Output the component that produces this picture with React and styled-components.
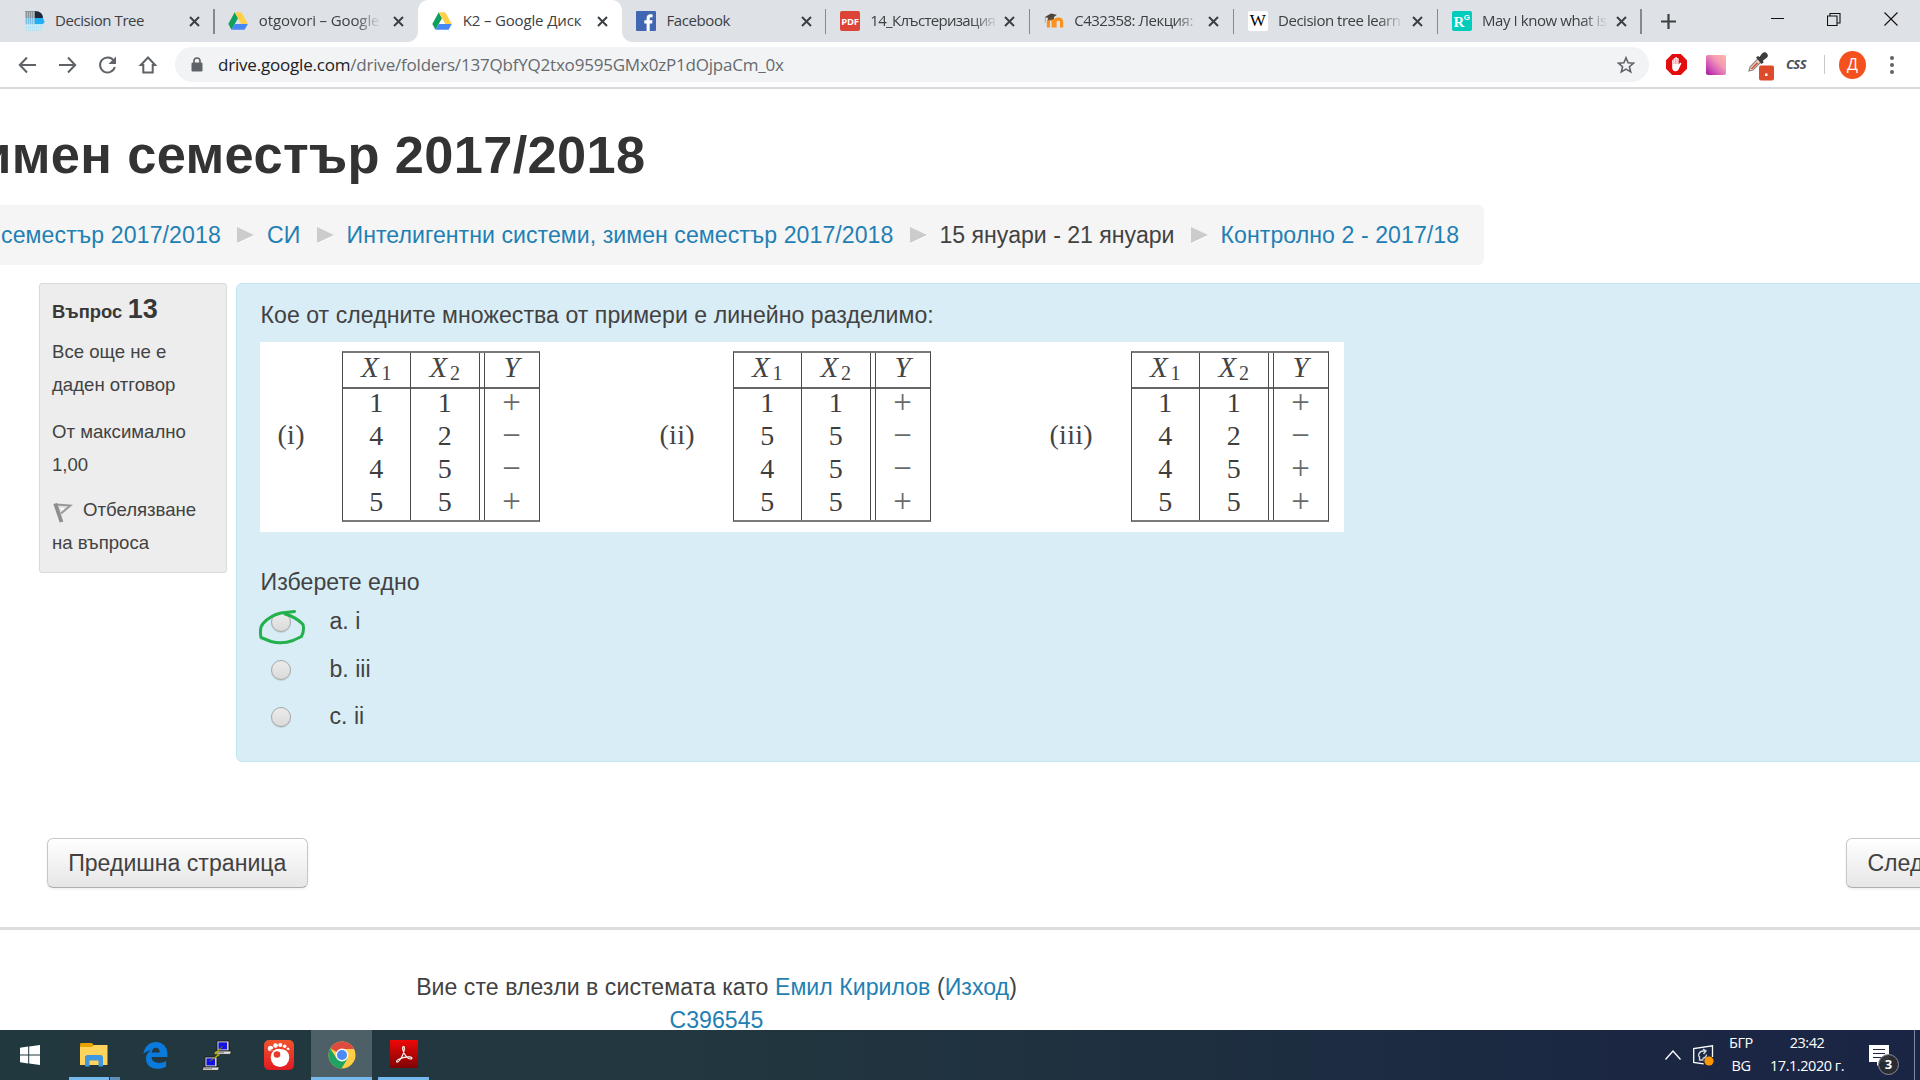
import React from "react";
import styled, { createGlobalStyle, css } from "styled-components";

const Global = createGlobalStyle`
  * { box-sizing: border-box; }
  html, body { margin: 0; padding: 0; background: #fff; }
  body { overflow: hidden; }
`;

const ui = `"Open Sans", "Noto Sans", sans-serif`;
const page = `"Liberation Sans", Arial, sans-serif`;

const Screen = styled.div`
  width: 1920px;
  height: 1080px;
  display: flex;
  flex-direction: column;
  overflow: hidden;
  background: #fff;
`;

/* ---------- browser chrome ---------- */

const TabStrip = styled.div`
  height: 42px;
  flex: none;
  display: flex;
  align-items: stretch;
  padding-left: 10.6px;
  background: #dee1e6;
`;

const Tab = styled.div`
  position: relative;
  width: 203.85px;
  flex: none;
  display: flex;
  align-items: center;
  padding-left: 14px;
  ${(p) =>
    p.$divider &&
    css`
      &::after {
        content: "";
        position: absolute;
        right: -0.5px;
        top: 9px;
        width: 1.5px;
        height: 25px;
        background: #85888d;
      }
    `}
  ${(p) =>
    p.$active &&
    css`
      background: #fff;
      border-radius: 10px 10px 0 0;
      &::before,
      &::after {
        content: "";
        position: absolute;
        bottom: 0;
        width: 10px;
        height: 10px;
      }
      &::before {
        left: -10px;
        background: radial-gradient(circle at 0 0, transparent 9.5px, #fff 10px);
      }
      &::after {
        right: -10px;
        background: radial-gradient(circle at 100% 0, transparent 9.5px, #fff 10px);
      }
    `}
`;

const TabTitle = styled.span`
  flex: none;
  width: 127px;
  margin-left: 10.4px;
  margin-right: 7px;
  padding-bottom: 2px;
  overflow: hidden;
  white-space: nowrap;
  font: 15px/24px ${ui};
  letter-spacing: ${(p) => p.$spacing}px;
  color: #3c4043;
  ${(p) =>
    p.$fade &&
    css`
      mask-image: linear-gradient(90deg, #000 ${p.$fade - 26}px, transparent ${p.$fade}px);
    `}
`;

const NewTab = styled.div`
  width: 54px;
  display: flex;
  align-items: center;
  justify-content: center;
`;

const WindowButtons = styled.div`
  margin-left: auto;
  display: flex;
  height: 38px;
`;

const WindowButton = styled.div`
  width: 57px;
  display: flex;
  align-items: center;
  justify-content: center;
`;

const Toolbar = styled.div`
  height: 47px;
  flex: none;
  display: flex;
  align-items: center;
  padding: 0 13px 0 17px;
  border-bottom: 2px solid #d9dae0;
  background: #fff;
`;

const NavButtons = styled.div`
  display: flex;
  gap: 20px;
  width: 158px;
`;

const AddressBar = styled.div`
  width: 1474px;
  height: 35px;
  display: flex;
  align-items: center;
  padding: 0 14px 0 16px;
  border-radius: 18px;
  background: #f1f3f4;
`;

const Url = styled.span`
  flex: 1;
  margin-left: 15px;
  font: 17px/26px ${ui};
  letter-spacing: -0.2px;
  color: #666a6e;
  white-space: nowrap;
`;

const Domain = styled.span`
  color: #202124;
`;

const Extensions = styled.div`
  display: flex;
  align-items: center;
  margin-left: 17px;
  flex: 1;
`;

const ExtIcon = styled.div`
  flex: none;
  display: flex;
  width: ${(p) => p.$w}px;
`;

const PinkSquare = styled.div`
  width: 20px;
  height: 20px;
  border-radius: 2px;
  background: linear-gradient(45deg, #a5179c 0%, #d860b8 35%, #f59cb4 65%, #fdb7a0 100%);
`;

const CssLabel = styled.span`
  width: 37.5px;
  font: italic bold 13px/20px ${ui};
  letter-spacing: -0.6px;
  color: #4a4d51;
  padding-bottom: 2px;
`;

const ToolbarDivider = styled.div`
  width: 1px;
  height: 19px;
  background: #c6c9cd;
  margin-right: 14.5px;
`;

const Avatar = styled.div`
  width: 27px;
  height: 28px;
  border-radius: 50%;
  background: #f4511e;
  color: #fff;
  font: 16px/27px ${ui};
  text-align: center;
  margin-right: 24px;
`;

const Dots = styled.div`
  display: flex;
  flex-direction: column;
  gap: 3px;
`;

const Dot = styled.i`
  width: 4px;
  height: 4px;
  border-radius: 50%;
  background: #5f6368;
`;

/* ---------- quiz page ---------- */

const Content = styled.main`
  flex: 1;
  min-height: 0;
  overflow: hidden;
  font: 23.1px/30px ${page};
  color: #424242;
`;

const TitleRow = styled.header`
  width: 645.5px;
  height: 116px;
  display: flex;
  justify-content: flex-end;
  padding-top: 40px;
`;

const Title = styled.h1`
  margin: 0;
  flex: none;
  font-size: 52.4px;
  line-height: 52px;
  letter-spacing: 0.35px;
  color: #333;
  white-space: nowrap;
`;

const Breadcrumb = styled.nav`
  width: 1484px;
  height: 60px;
  display: flex;
  align-items: center;
  padding-left: 1px;
  border-radius: 0 6px 6px 0;
  background: #f5f5f5;
  white-space: nowrap;
`;

const Crumb = styled.span`
  flex: none;
  width: ${(p) => p.$w}px;
  letter-spacing: ${(p) => p.$spacing || 0}px;
  color: ${(p) => (p.$plain ? "#424242" : "#1f80b4")};
`;

const Arrow = styled.i`
  flex: none;
  margin: 0 13px 0 16px;
  border-left: 17px solid #ccc;
  border-top: 8px solid transparent;
  border-bottom: 8px solid transparent;
  filter: drop-shadow(0 1px 0 #fff);
`;

const QuestionRow = styled.section`
  display: flex;
  align-items: flex-start;
  gap: 9px;
  margin-top: 18px;
  padding-left: 39px;
`;

const InfoBox = styled.aside`
  width: 188px;
  height: 290px;
  flex: none;
  padding: 9px 12px 0;
  border: 1.5px solid #dadada;
  border-radius: 3px;
  background: #ededed;
  font-size: 18.6px;
  line-height: 33.1px;
  white-space: nowrap;
`;

const QuestionNo = styled.h3`
  height: 33px;
  margin: 0 0 9px;
  display: flex;
  align-items: baseline;
  gap: 5.5px;
  font-size: 18.4px;
  line-height: 33px;
  color: #383838;
`;

const Number = styled.span`
  font-size: 27px;
`;

const InfoText = styled.p`
  margin: 0 0 ${(p) => p.$gap || 0}px;
`;

const Flag = styled.svg`
  width: 20px;
  height: 21px;
  margin: 0 10px -7px 1px;
`;

const QuestionBox = styled.article`
  flex: none;
  width: 1720px;
  height: 479px;
  padding: 16px 22.5px 0;
  border: 1.5px solid #bfe8f2;
  border-radius: 6px;
  background: #d9edf6;
`;

const Prompt = styled.p`
  margin: 0;
  padding-left: 1px;
  letter-spacing: 0.04px;
`;

const Figure = styled.div`
  display: grid;
  grid-template-columns: 64px 198px 120px 73px 198px 119px 81px 198px;
  width: 1084px;
  height: 190px;
  margin: 11.5px 0 35px;
  padding: 9px 0 0 18px;
  background: #fff;
  font-family: "Liberation Serif", "Times New Roman", serif;
`;

const SetLabel = styled.span`
  grid-column: ${(p) => p.$col};
  font-size: 28px;
  line-height: 167px;
  letter-spacing: 0.3px;
  color: #444;
`;

const DataTable = styled.div`
  grid-column: ${(p) => p.$col};
  height: 171px;
  display: grid;
  grid-template-columns: 67.5px 68.5px 5px 1fr;
  border: 1.5px solid #4a4a4a;
  border-top: 2px solid #7a7a7a;
  border-bottom: 2px solid #7a7a7a;
`;

const Column = styled.div`
  display: flex;
  flex-direction: column;
  border-left: ${(p) => (p.$line ? "1.5px solid #4a4a4a" : "none")};
`;

const HeadCell = styled.div`
  height: 36px;
  flex: none;
  display: flex;
  justify-content: center;
  align-items: baseline;
  border-bottom: 2px solid #666;
  font-size: 29px;
  font-style: italic;
  line-height: 28px;
  margin-bottom: -3px;
  color: #444;
`;

const Sub = styled.span`
  margin: 0 0 0 3px;
  font-size: 20px;
  font-style: normal;
  line-height: 1;
  position: relative;
  top: 3px;
`;

const Cell = styled.div`
  height: 33.3px;
  flex: none;
  text-align: center;
  font-size: ${(p) => (p.$sign ? 33 : 28)}px;
  line-height: 33.3px;
  color: ${(p) => (p.$sign ? "#6a6a6a" : "#3e3e3e")};
`;

const Option = styled.div`
  height: ${(p) => p.$h}px;
  display: flex;
  align-items: center;
  gap: 38.5px;
  padding-left: 11.5px;
`;

const RadioWrap = styled.span`
  position: relative;
  display: block;
  width: 20px;
  height: 20px;
  margin-top: 3px;
`;

const Radio = styled.i`
  display: block;
  width: 20px;
  height: 20px;
  border: 1.5px solid #a6a6a6;
  border-radius: 50%;
  background: linear-gradient(#ececec, #dadada);
  box-shadow: 0 1px 1px rgba(0, 0, 0, 0.12);
`;

const Scribble = styled.svg`
  position: absolute;
  left: -13.5px;
  top: -3.5px;
  width: 48px;
  height: 36px;
`;

const ScribbleMask = styled.i`
  position: absolute;
  left: 0;
  top: -1px;
  width: 20px;
  height: 3px;
  background: #d9edf6;
`;

const PagerRow = styled.div`
  display: flex;
  margin-top: 76px;
  padding-left: 46.5px;
  gap: 1538px;
`;

const PagerButton = styled.button`
  flex: none;
  width: 261.5px;
  height: 50px;
  padding: 0 0 1px;
  border: 1.5px solid #c8c8c8;
  border-bottom-color: #aeaeae;
  border-radius: 6px;
  background: linear-gradient(#fff, #e6e6e6);
  box-shadow: 0 1px 3px rgba(0, 0, 0, 0.08);
  color: #424242;
  font: 23.1px/30px ${page};
  white-space: nowrap;
`;

const Rule = styled.hr`
  height: 3px;
  margin: 39px 0 41px;
  border: 0;
  background: #ddd;
`;

const Footer = styled.footer`
  width: 1433px;
  text-align: center;
  line-height: 33px;
  letter-spacing: 0.04px;
`;

const FootLink = styled.span`
  color: #1f80b4;
`;

/* ---------- taskbar ---------- */

const Taskbar = styled.div`
  height: 50px;
  flex: none;
  display: flex;
  align-items: stretch;
  background: linear-gradient(90deg, #22383f 0%, #22373f 35%, #1e2f40 62%, #1b2742 85%, #1a2545 100%);
`;

const TaskItem = styled.div`
  width: ${(p) => p.$w}px;
  flex: none;
  display: flex;
  align-items: center;
  justify-content: center;
  padding-bottom: ${(p) => p.$lift || 0}px;
  background: ${(p) => (p.$active ? "#4d5f67" : "transparent")};
  box-shadow: ${(p) => (p.$running ? "inset 0 -3px 0 #76b9ed" : "none")};
`;

const Stack = styled.div`
  width: 11px;
  margin-right: 10px;
  box-shadow: inset 1px 0 0 #22383f, inset 0 -3px 0 #5d8fb8;
  align-self: flex-end;
  height: 3px;
`;

const Spacer = styled.div`
  width: ${(p) => p.$w}px;
  flex: ${(p) => (p.$w ? "none" : 1)};
`;

const TrayIcon = styled.div`
  display: flex;
  align-items: center;
  width: ${(p) => p.$w}px;
`;

const TrayText = styled.div`
  width: ${(p) => p.$w}px;
  padding-top: 2px;
  text-align: center;
  font: 14.5px/22.5px ${ui};
  letter-spacing: -0.45px;
  color: #fff;
  white-space: nowrap;
`;

const ActionCenter = styled.div`
  position: relative;
  width: 57px;
  margin-left: 1px;
  padding: 15px 0 0 11px;
  border-right: 1px solid #8089a0;
`;

const Badge = styled.span`
  position: absolute;
  left: 20px;
  top: 24px;
  width: 21px;
  height: 21px;
  border: 1.5px solid #8a8d92;
  border-radius: 50%;
  background: rgba(43, 45, 50, 0.94);
  color: #fff;
  font: bold 13px/18px ${ui};
  text-align: center;
`;

/* ---------- drawings ---------- */

const CloseIcon = () => (
  <svg width="11" height="11" viewBox="0 0 11 11" stroke="#3c4043" strokeWidth="2">
    <path d="M1 1l9 9M10 1l-9 9" />
  </svg>
);

const DriveIcon = () => (
  <svg width="20" height="20" viewBox="0 0 20 20">
    <path d="M6.7 1.2L0.3 13l3.2 5.8L10 7.2z" fill="#11a05c" />
    <path d="M6.7 1.2h6.6L19.8 13h-6.6z" fill="#ffcf48" />
    <path d="M6.9 13h12.9l-3.2 5.8H3.5z" fill="#4787f3" />
  </svg>
);

const HeadIcon = () => (
  <svg width="20" height="20" viewBox="0 0 20 20">
    <path d="M0 0h10v7H0z" fill="#8b949b" />
    <path d="M10 0c5 0 8 3 8 7h-8z" fill="#1f2a3a" />
    <path d="M0 7h10v6H0z" fill="#7cc0e6" />
    <path d="M10 7h8l1.6 4-1.6 2h-8z" fill="#22b0f5" />
    <path d="M0 13h18l-.6 4-2 1.6V20H0z" fill="#b7e3f3" />
    <path d="M0 2h10M0 4h10M0 6h10M0 8h10M0 10h10M0 12h10M0 15h17M0 18h15" stroke="#fff" strokeWidth=".7" strokeDasharray="1 1" />
  </svg>
);

const FacebookIcon = () => (
  <svg width="20" height="20" viewBox="0 0 20 20">
    <rect width="20" height="20" rx="1" fill="#4267b2" />
    <path d="M10.6 20v-7.6H8.3V9.3h2.3V7.2c0-2.5 1.5-3.9 3.8-3.9.9 0 1.8.1 2.2.2v2.7h-1.5c-1.2 0-1.4.6-1.4 1.5v1.6h2.8l-.4 3.1h-2.4V20z" fill="#fff" />
  </svg>
);

const IconTile = styled.span`
  width: 20px;
  height: 20px;
  flex: none;
  border-radius: 2px;
  background: ${(p) => p.$bg};
  color: ${(p) => p.$fg};
  font: ${(p) => p.$font};
  letter-spacing: ${(p) => p.$spacing || 0}px;
  text-align: center;
  white-space: nowrap;
`;

const SmallG = styled.sup`
  font: bold 8px/8px "Liberation Sans", sans-serif;
  vertical-align: 7px;
`;

const MoodleIcon = () => (
  <svg width="20" height="20" viewBox="0 0 20 20" fill="none">
    <path d="M4.4 16.5v-5.6c0-3.6 4.8-3.6 4.8 0v5.6M11 16.5v-5.6c0-3.6 6.6-3.6 6.6 0v5.6" stroke="#f7931e" strokeWidth="3.2" />
    <path d="M0.5 6.2L7 2.5l5.8 1.3L8.2 7.4z" fill="#4b4238" />
    <path d="M4 6.5v3c2-.8 4-.8 6-1.500V5z" fill="#5a4a3c" />
    <path d="M1.300 6.500v5" stroke="#a89a88" strokeWidth=".8" />
  </svg>
);

const NavIcon = ({ children }) => (
  <svg width="20" height="20" viewBox="0 0 20 20" fill="none" stroke="#5f6368" strokeWidth="2">
    {children}
  </svg>
);

const EdgeIcon = () => (
  <svg width="25" height="27" viewBox="0 0 25 27">
    <path
      d="M0.400 12.100C1.200 5.300 6 0 12.800 0 20 0 24.400 5 24.400 12v3H8.500c.2 4.200 3.600 5.900 7.600 5.900 2.600 0 4.900-.7 7-2v5.600c-2.300 1.500-5.400 2.300-8.900 2.300C7.300 26.800 3 22.700 3 16.600c0-3.400 1.700-6.500 4.700-8.400C4.600 8.800 1.900 10.300.4 12.100zM8.700 10.500h8.100c0-3.200-1.500-4.800-3.900-4.800-2.300 0-3.700 1.800-4.200 4.800z"
      fill="#0a7bdc"
    />
  </svg>
);

const PuttyIcon = () => (
  <svg width="30" height="31" viewBox="0 0 30 31">
    {[[12, 0], [0, 16]].map(([x, y]) => (
      <g key={x} transform={`translate(${x} ${y})`}>
        <path d="M3 1h12v10H3z" fill="#d0d0d0" stroke="#111" strokeWidth=".8" />
        <path d="M4.500 2.400h8.500v7H4.500z" fill="#1212e6" />
        <path d="M1 11h16.500l-1.200 3.400H.6z" fill="#e0e0e0" stroke="#111" strokeWidth=".8" />
        <path d="M2 12.700h8" stroke="#888" />
      </g>
    ))}
    <path d="M21 6l-9 7.500 4 1L7.500 21.500 18 14.800l-4-1.200z" fill="#f5f000" stroke="#6d6d00" strokeWidth=".5" />
  </svg>
);

const GomIcon = () => (
  <svg width="30" height="30" viewBox="0 0 30 30">
    <defs>
      <linearGradient id="gom" x1="0" y1="0" x2="0" y2="1">
        <stop offset="0" stopColor="#f0532b" />
        <stop offset="1" stopColor="#e31a24" />
      </linearGradient>
    </defs>
    <rect width="30" height="30" rx="5" fill="url(#gom)" />
    <ellipse cx="16" cy="17.500" rx="9.300" ry="9.500" fill="#fff" />
    <circle cx="6.500" cy="8.500" r="2.700" fill="#fff" />
    <circle cx="11.500" cy="5.600" r="2.300" fill="#fff" />
    <circle cx="16.300" cy="5" r="2.100" fill="#fff" />
    <circle cx="20.700" cy="6.200" r="1.800" fill="#fff" />
    <circle cx="24" cy="9" r="1.500" fill="#fff" />
    <circle cx="13" cy="14.500" r="3.300" fill="#e8392a" />
    <path d="M6.500 10.500Q15 5.500 25 11" stroke="#ec4027" strokeWidth="1.200" fill="none" />
  </svg>
);

const ChromeIcon = () => (
  <svg width="28" height="28" viewBox="0 0 28 28">
    <circle cx="14" cy="14" r="13.500" fill="#ffcd46" />
    <path d="M14 14L2.300 7.250A13.500 13.500 0 0 1 25.700 7.250L25.700 8H14z" fill="#dd4b3e" />
    <path d="M2.300 7.250A13.500 13.500 0 0 0 13.500 27.500L19.600 17.500 14 20 8.400 17.250z" fill="#1ea362" />
    <circle cx="14" cy="14" r="6.400" fill="#f5f5f5" />
    <circle cx="14" cy="14" r="5" fill="#4c8bf5" />
  </svg>
);

const AcrobatIcon = () => (
  <svg width="28" height="28" viewBox="0 0 28 28">
    <defs>
      <linearGradient id="acro" x1="0" y1="0" x2="0" y2="1">
        <stop offset="0" stopColor="#f00808" />
        <stop offset="1" stopColor="#7d0303" />
      </linearGradient>
    </defs>
    <rect width="28" height="28" rx="1" fill="url(#acro)" />
    <path
      d="M13.600 6.500c-1.800.2-.8 4 .6 6.800 1.400 2.900 4 5.400 6.300 5.700 2.100.2 2-1.900-.6-2.100-3.300-.3-7.500.7-10.600 2.100-2.500 1.200-3.300 2.500-2.500 3 1.500.8 4.200-3.200 5.900-7 1.500-3.500 2.500-8.400.9-8.500z"
      fill="none"
      stroke="#fff"
      strokeWidth="1.100"
    />
  </svg>
);

const ExplorerIcon = () => (
  <svg width="28" height="26" viewBox="0 0 28 26">
    <path d="M0 2.500Q0 1 1 1h11l2 2.500v2H0z" fill="#e8a200" />
    <path d="M0 5h12l2-2h13.500v20H0z" fill="#ffd35c" />
    <path d="M5 24.500V15.500q0-2.500 2.500-2.500h13q2.500 0 2.500 2.500v9h-4.500v-6h-9v6z" fill="#3f97dd" />
  </svg>
);

const tabs = [
  { title: "Decision Tree", icon: <HeadIcon />, spacing: -0.42, divider: true },
  { title: "otgovori – Google", icon: <DriveIcon />, spacing: -0.12, fade: 122 },
  { title: "K2 – Google Диск", icon: <DriveIcon />, spacing: -0.15, active: true },
  { title: "Facebook", icon: <FacebookIcon />, spacing: -0.42, divider: true },
  {
    title: "14_Клъстеризация",
    icon: <IconTile $bg="#db4437" $fg="#fff" $font={`bold 9.5px/21px ${ui}`} $spacing={-0.3}>PDF</IconTile>,
    spacing: -0.7,
    fade: 128,
    divider: true,
  },
  { title: "C432358: Лекция:", icon: <MoodleIcon />, spacing: -0.5, fade: 126, divider: true },
  {
    title: "Decision tree learn",
    icon: <IconTile $bg="#fff" $fg="#000" $font={`17px/20px "Liberation Serif", serif`}>W</IconTile>,
    spacing: -0.48,
    fade: 126,
    divider: true,
  },
  {
    title: "May I know what is",
    icon: (
      <IconTile $bg="#00ccbb" $fg="#fff" $font={`bold 15px/22px "Liberation Serif", serif`} $spacing={-0.5}>
        R<SmallG>G</SmallG>
      </IconTile>
    ),
    spacing: -0.42,
    fade: 126,
    divider: true,
  },
];

const sets = [
  { label: "(i)", col: 1, x1: [1, 4, 4, 5], x2: [1, 2, 5, 5], y: ["+", "−", "−", "+"] },
  { label: "(ii)", col: 4, x1: [1, 5, 4, 5], x2: [1, 5, 5, 5], y: ["+", "−", "−", "+"] },
  { label: "(iii)", col: 7, x1: [1, 4, 4, 5], x2: [1, 2, 5, 5], y: ["+", "−", "+", "+"] },
];

const SetTable = ({ set }) => (
  <>
    <SetLabel $col={set.col}>{set.label}</SetLabel>
    <DataTable $col={set.col + 1}>
      <Column>
        <HeadCell>X<Sub>1</Sub></HeadCell>
        {set.x1.map((v, i) => <Cell key={i}>{v}</Cell>)}
      </Column>
      <Column $line>
        <HeadCell>X<Sub>2</Sub></HeadCell>
        {set.x2.map((v, i) => <Cell key={i}>{v}</Cell>)}
      </Column>
      <Column $line><HeadCell /></Column>
      <Column $line>
        <HeadCell>Y</HeadCell>
        {set.y.map((v, i) => <Cell key={i} $sign>{v}</Cell>)}
      </Column>
    </DataTable>
  </>
);

const options = [
  { text: "a. i", h: 48, marked: true },
  { text: "b. iii", h: 48 },
  { text: "c. ii", h: 46 },
];

export default function App() {
  return (
    <Screen>
      <Global />
      <TabStrip>
        {tabs.map((t) => (
          <Tab key={t.title} $active={t.active} $divider={t.divider}>
            {t.icon}
            <TabTitle $spacing={t.spacing} $fade={t.fade}>{t.title}</TabTitle>
            <CloseIcon />
          </Tab>
        ))}
        <NewTab>
          <svg width="15" height="15" viewBox="0 0 15 15" stroke="#3c4043" strokeWidth="2.200">
            <path d="M7.500 0v15M0 7.500h15" />
          </svg>
        </NewTab>
        <WindowButtons>
          <WindowButton>
            <svg width="13" height="13"><path d="M0 5h13v1H0z" fill="#111" /></svg>
          </WindowButton>
          <WindowButton>
            <svg width="16" height="13" viewBox="0 0 16 13" fill="none" stroke="#111" strokeWidth="1.100">
              <path d="M.5 3h9.500v9.500H.5zM3 3V.5h10V10h-3" />
            </svg>
          </WindowButton>
          <WindowButton>
            <svg width="15" height="14" viewBox="0 0 15 14" stroke="#111" strokeWidth="1.100">
              <path d="M.5.5l13 13M13.500.5l-13 13" />
            </svg>
          </WindowButton>
        </WindowButtons>
      </TabStrip>
      <Toolbar>
        <NavButtons>
          <NavIcon><path d="M19 10H3M10 2.500L2.800 10l7.200 7.500" /></NavIcon>
          <NavIcon><path d="M2 10h16M11 2.500l7.200 7.500-7.200 7.500" /></NavIcon>
          <NavIcon>
            <path d="M16.800 5.800A7.500 7.500 0 1 0 17.800 12" />
            <path d="M19 1.500v7.500h-7.500z" fill="#5f6368" stroke="none" />
          </NavIcon>
          <NavIcon><path d="M11 2.500L3.800 10h2.500v7.500h9.400V10h2.500z" /></NavIcon>
        </NavButtons>
        <AddressBar>
          <svg width="12" height="15" viewBox="0 0 12 15">
            <path d="M3 6V4a3 3 0 0 1 6 0v2" fill="none" stroke="#5f6368" strokeWidth="1.600" />
            <rect x=".5" y="5.500" width="11" height="9" rx="1.200" fill="#5f6368" />
          </svg>
          <Url><Domain>drive.google.com</Domain>/drive/folders/137QbfYQ2txo9595GMx0zP1dOjpaCm_0x</Url>
          <svg width="18" height="18" viewBox="0 0 18 18" fill="none" stroke="#5f6368" strokeWidth="1.600">
            <path d="M9 1.800l2.100 5 5.400.4-4.100 3.500 1.300 5.200L9 13.100l-4.700 2.800 1.300-5.200L1.500 7.200l5.400-.4z" />
          </svg>
        </AddressBar>
        <Extensions>
          <ExtIcon $w={40}>
            <svg width="21" height="21" viewBox="0 0 21 21">
              <path d="M6.200 0h8.600L21 6.200v8.600L14.800 21H6.200L0 14.800V6.200z" fill="#e40d0d" />
              <path d="M6.200 10V6.200q.9-1.200 1.500 0V4.500q.9-1.200 1.600 0V3.600q.9-1.200 1.700 0v.9q.9-1.200 1.600 0v6l1.500-1.700q1.300-.5 1.200.6l-2.500 5.600q-.8 2.200-3.200 2.200-3.400 0-3.400-3.600z" fill="#fff" />
              <path d="M7.800 6v4M9.400 5v5M11 5v5" stroke="#e40d0d" strokeWidth=".4" />
            </svg>
          </ExtIcon>
          <ExtIcon $w={41}><PinkSquare /></ExtIcon>
          <ExtIcon $w={39}>
            <svg width="28" height="32" viewBox="0 0 28 32">
              <path d="M2 22l1-4 8-8.500 3.500 3-8.500 8.500z" fill="#f2d5cc" stroke="#8b8b8b" strokeWidth="1.200" />
              <path d="M3.500 20l6-6.500 2 .5-6 6z" fill="#dd5533" />
              <path d="M9 8.500l2-1.500 1.500 1L15 4.500q3-2.500 5 0t-.5 4.500L16 11.500l.5 2-2 1.500z" fill="#3c3c3c" />
              <rect x="12" y="16.500" width="15" height="15" rx="2" fill="#dd4b2a" />
              <rect x="18" y="24.500" width="2.500" height="2.500" fill="#fff" />
            </svg>
          </ExtIcon>
          <CssLabel>CSS</CssLabel>
          <ToolbarDivider />
          <Avatar>Д</Avatar>
          <Dots><Dot /><Dot /><Dot /></Dots>
        </Extensions>
      </Toolbar>

      <Content>
        <TitleRow><Title>имен семестър 2017/2018</Title></TitleRow>
        <Breadcrumb>
          <Crumb $w={220} $spacing={0.1}>семестър 2017/2018</Crumb>
          <Arrow />
          <Crumb $w={33.5}>СИ</Crumb>
          <Arrow />
          <Crumb $w={547} $spacing={0.05}>Интелигентни системи, зимен семестър 2017/2018</Crumb>
          <Arrow />
          <Crumb $w={235} $plain>15 януари - 21 януари</Crumb>
          <Arrow />
          <Crumb $w={240} $spacing={0.07}>Контролно 2 - 2017/18</Crumb>
        </Breadcrumb>

        <QuestionRow>
          <InfoBox>
            <QuestionNo>Въпрос <Number>13</Number></QuestionNo>
            <InfoText $gap={14}>Все още не е<br />даден отговор</InfoText>
            <InfoText $gap={11.5}>От максимално<br />1,00</InfoText>
            <InfoText>
              <Flag viewBox="0 0 20 21">
                <path d="M3 2.500L17.500 3.500 8 11.500" fill="#e0e0e0" stroke="#999" strokeWidth="2" />
                <path d="M2.200 1.500L8.500 20" stroke="#8e8e8e" strokeWidth="3.800" />
                <path d="M7 5.500l5 .4L8.500 9z" fill="#fff" />
              </Flag>
              Отбелязване<br />на въпроса
            </InfoText>
          </InfoBox>
          <QuestionBox>
            <Prompt>Кое от следните множества от примери е линейно разделимо:</Prompt>
            <Figure>
              {sets.map((s) => <SetTable key={s.label} set={s} />)}
            </Figure>
            <Prompt>Изберете едно</Prompt>
            {options.map((o) => (
              <Option key={o.text} $h={o.h}>
                <RadioWrap>
                  <Radio />
                  {o.marked && (
                    <>
                      <ScribbleMask />
                      <Scribble viewBox="0 0 48 36">
                        <path
                          d="M36.500 2.500L23 4C16 5.500 11 8 5 14.500 2 18 2 23 3 28.500L13 32.500Q24 35.500 35 31.500L43.500 27.500Q46.500 22 45 15.500 38 8 27 5"
                          fill="none"
                          stroke="#22b14c"
                          strokeWidth="3"
                          strokeLinecap="round"
                          strokeLinejoin="round"
                        />
                      </Scribble>
                    </>
                  )}
                </RadioWrap>
                {o.text}
              </Option>
            ))}
          </QuestionBox>
        </QuestionRow>

        <PagerRow>
          <PagerButton>Предишна страница</PagerButton>
          <PagerButton>Следваща страница</PagerButton>
        </PagerRow>
        <Rule />
        <Footer>
          Вие сте влезли в системата като <FootLink>Емил Кирилов</FootLink> (<FootLink>Изход</FootLink>)
          <br />
          <FootLink>C396545</FootLink>
        </Footer>
      </Content>

      <Taskbar>
        <TaskItem $w={60}>
          <svg width="20" height="20" viewBox="0 0 20 20" fill="#fff">
            <path d="M0 2.800l8.200-1.200v7.900H0zM9.200 1.500L20 0v9.500H9.200zM0 10.500h8.200v7.900L0 17.200zM9.200 10.500H20V20L9.200 18.500z" />
          </svg>
        </TaskItem>
        <Spacer $w={9} />
        <TaskItem $w={40} $running><Spacer $w={9} /><ExplorerIcon /></TaskItem>
        <Stack />
        <TaskItem $w={51}><EdgeIcon /></TaskItem>
        <Spacer $w={10} />
        <TaskItem $w={52}><PuttyIcon /></TaskItem>
        <Spacer $w={10} />
        <TaskItem $w={52}><GomIcon /></TaskItem>
        <Spacer $w={6} />
        <TaskItem $w={61} $active $running><ChromeIcon /></TaskItem>
        <Spacer $w={6} />
        <TaskItem $w={51} $running $lift={2}><AcrobatIcon /></TaskItem>
        <Spacer />
        <TrayIcon $w={28}>
          <svg width="16" height="10" viewBox="0 0 16 10" fill="none" stroke="#fff" strokeWidth="1.300">
            <path d="M.5 9.500L8 1l7.500 8.500" />
          </svg>
        </TrayIcon>
        <TrayIcon $w={32}>
          <svg width="21" height="21" viewBox="0 0 21 21" fill="none" stroke="#fff" strokeWidth="1.300">
            <path d="M19.500 12V.8L.7 3.500v14l10 1.300" />
            <path d="M5.500 11.500q0-5 4.500-5.500h3M10 4l3 2-2.500 3M13.500 9.500q0 3-4 4M6.500 11v4h4" strokeWidth="1.400" stroke="#d5d8de" />
            <circle cx="16" cy="16" r="4.600" fill="#ff9800" stroke="none" />
          </svg>
        </TrayIcon>
        <TrayText $w={32}>БГР<br />BG</TrayText>
        <TrayText $w={100}>23:42<br />17.1.2020 г.</TrayText>
        <ActionCenter>
          <svg width="21" height="21" viewBox="0 0 21 21">
            <path d="M0 0h20v17h-8l-4 4v-4H0z" fill="#fff" />
            <path d="M4 4.500h12M4 8.500h12M4 12.500h9" stroke="#1b2742" strokeWidth="1.100" />
          </svg>
          <Badge>3</Badge>
        </ActionCenter>
        <Spacer $w={5} />
      </Taskbar>
    </Screen>
  );
}
